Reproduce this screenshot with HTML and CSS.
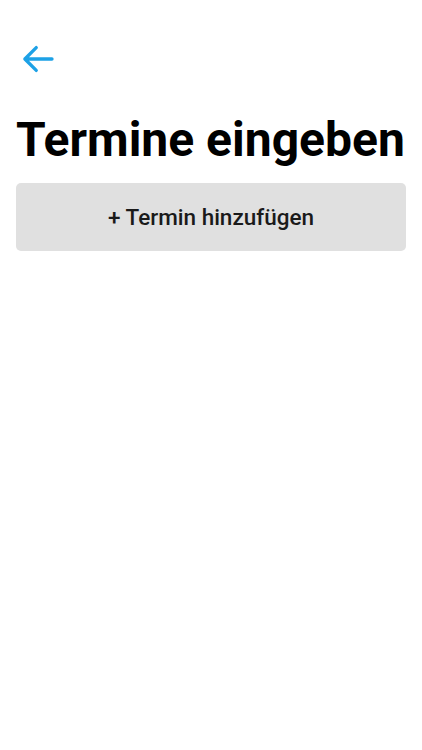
FILE: index.html
```html
<!DOCTYPE html>
<html lang="de">

<head>
    <meta charset="UTF-8" />
    <title>Termine eingeben</title>
    <link rel="stylesheet" href="styles.css">
</head>

<body>
    <div class="screen">
        <!-- Header -->
        <div class="topbar">
            <button class="back" aria-label="Zurück">
                <svg width="42" height="42" viewBox="0 0 24 24">
                    <path d="M20 12H4.5M11 5.5L4.5 12L11 18.5" fill="none" stroke="#1da1e6" stroke-width="1.9"
                        stroke-linecap="round" stroke-linejoin="round" />
                </svg>
            </button>
        </div>

        <h1>Termine eingeben</h1>

        <button class="btn-add">+ Termin hinzufügen</button>
    </div>
</body>

</html>
```

FILE: styles.css
```css
* {
    box-sizing: border-box;
    margin: 0;
    padding: 0;
    font-family: Roboto, "Noto Sans", sans-serif;
}

body {
    background: #fff;
    color: #000;
}

.screen {
    padding: 0 16px;
}

.topbar {
    height: 100px;
    display: flex;
    align-items: flex-start;
    padding-top: 38px;
}

.back {
    background: none;
    border: none;
    width: 42px;
    height: 42px;
    margin-left: 1px;
    cursor: pointer;
}

.back svg {
    display: block;
}

h1 {
    font-size: 48px;
    font-weight: 700;
    line-height: 80px;
    white-space: nowrap;
    margin-bottom: 3px;
}

.btn-add {
    display: block;
    width: 100%;
    height: 68px;
    border: none;
    border-radius: 5px;
    background: #e0e0e0;
    color: #1a1a1a;
    font-size: 22.5px;
    font-weight: 500;
    cursor: pointer;
}
```
